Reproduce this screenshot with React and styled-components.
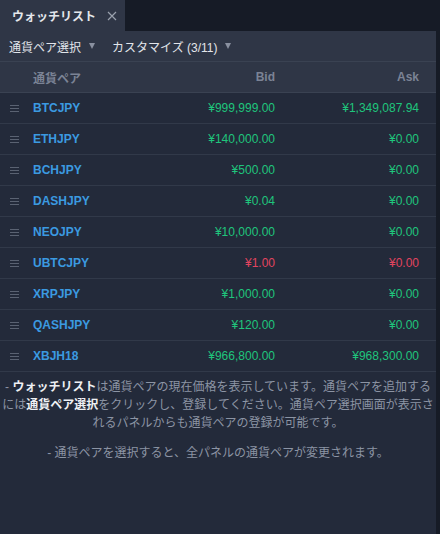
import styled, { createGlobalStyle } from "styled-components";

const pairs = [
  { name: "BTCJPY", bid: "¥999,999.00", ask: "¥1,349,087.94" },
  { name: "ETHJPY", bid: "¥140,000.00", ask: "¥0.00" },
  { name: "BCHJPY", bid: "¥500.00", ask: "¥0.00" },
  { name: "DASHJPY", bid: "¥0.04", ask: "¥0.00" },
  { name: "NEOJPY", bid: "¥10,000.00", ask: "¥0.00" },
  { name: "UBTCJPY", bid: "¥1.00", ask: "¥0.00", down: true },
  { name: "XRPJPY", bid: "¥1,000.00", ask: "¥0.00" },
  { name: "QASHJPY", bid: "¥120.00", ask: "¥0.00" },
  { name: "XBJH18", bid: "¥966,800.00", ask: "¥968,300.00" },
];

export default function App() {
  return (
    <>
      <GlobalStyle />
      <Page>
        <TabBar>
          <Tab>
            ウォッチリスト
            <Close>
              <svg width="10" height="10" viewBox="0 0 10 10">
                <path d="M1 1L9 9M9 1L1 9" stroke="currentColor" strokeWidth="1.2" />
              </svg>
            </Close>
          </Tab>
        </TabBar>
        <Panel>
          <Toolbar>
            <Menu>
              通貨ペア選択 <Caret />
            </Menu>
            <Menu>
              カスタマイズ (3/11) <Caret />
            </Menu>
          </Toolbar>
          <HeadRow>
            <span />
            <HeadCell>通貨ペア</HeadCell>
            <HeadCell right>Bid</HeadCell>
            <HeadCell right>Ask</HeadCell>
          </HeadRow>
          {pairs.map((p) => (
            <Row key={p.name}>
              <Handle>
                <i />
                <i />
                <i />
              </Handle>
              <Pair>{p.name}</Pair>
              <Price down={p.down}>{p.bid}</Price>
              <Price down={p.down}>{p.ask}</Price>
            </Row>
          ))}
          <Note>
            - <b>ウォッチリスト</b>は通貨ペアの現在価格を表示しています。通貨ペアを追加するには<b>通貨ペア選択</b>をクリックし、登録してください。通貨ペア選択画面が表示されるパネルからも通貨ペアの登録が可能です。
          </Note>
          <Note>- 通貨ペアを選択すると、全パネルの通貨ペアが変更されます。</Note>
        </Panel>
      </Page>
    </>
  );
}

const GlobalStyle = createGlobalStyle`
  html, body {
    margin: 0;
    padding: 0;
    background: #161b26;
    font-family: "Liberation Sans", "Noto Sans CJK JP", Arial, sans-serif;
    font-size: 12px;
  }
`;

const Page = styled.div`
  width: 440px;
  height: 534px;
  display: flex;
  flex-direction: column;
  background: #161b26;
  overflow: hidden;
`;

const TabBar = styled.div`
  height: 31px;
  display: flex;
`;

const Tab = styled.div`
  width: 125px;
  display: flex;
  align-items: center;
  padding-left: 12px;
  box-sizing: border-box;
  background: #2f3646;
  color: #e4e7ec;
  font-weight: bold;
  font-size: 12px;
`;

const Close = styled.span`
  display: flex;
  margin-left: 11px;
  color: #9aa1ad;
`;

const Panel = styled.div`
  width: 436px;
  flex: 1;
  background: #232a3a;
  display: flex;
  flex-direction: column;
`;

const Toolbar = styled.div`
  height: 30px;
  display: flex;
  align-items: center;
  gap: 17px;
  padding-left: 9px;
  background: #2f3646;
  border-bottom: 1px solid #3a4252;
`;

const Menu = styled.div`
  display: flex;
  align-items: center;
  gap: 8px;
  color: #e2e5ea;
`;

const Caret = styled.span`
  width: 0;
  height: 0;
  border-left: 3px solid transparent;
  border-right: 3px solid transparent;
  border-top: 6px solid #8a91a0;
`;

const grid = `
  display: grid;
  grid-template-columns: 33px 120px 122px 144px;
  align-items: center;
  height: 30px;
`;

const HeadRow = styled.div`
  ${grid}
  background: #2f3646;
  border-bottom: 1px solid #3a4252;
`;

const HeadCell = styled.span`
  color: #7b8395;
  font-weight: bold;
  text-align: ${(p) => (p.right ? "right" : "left")};
`;

const Row = styled.div`
  ${grid}
  border-bottom: 1px solid #313949;
`;

const Handle = styled.span`
  display: flex;
  flex-direction: column;
  gap: 2px;
  padding-left: 10px;
  i {
    display: block;
    width: 9px;
    height: 1px;
    background: #5a6272;
  }
`;

const Pair = styled.span`
  color: #3b9ae1;
  font-weight: bold;
`;

const Price = styled.span`
  text-align: right;
  color: ${(p) => (p.down ? "#e1445f" : "#1fc57c")};
`;

const Note = styled.p`
  margin: 6px 0 6px;
  text-align: center;
  line-height: 18px;
  color: #8c94a4;
  b {
    color: #eef0f3;
    font-weight: bold;
  }
`;
